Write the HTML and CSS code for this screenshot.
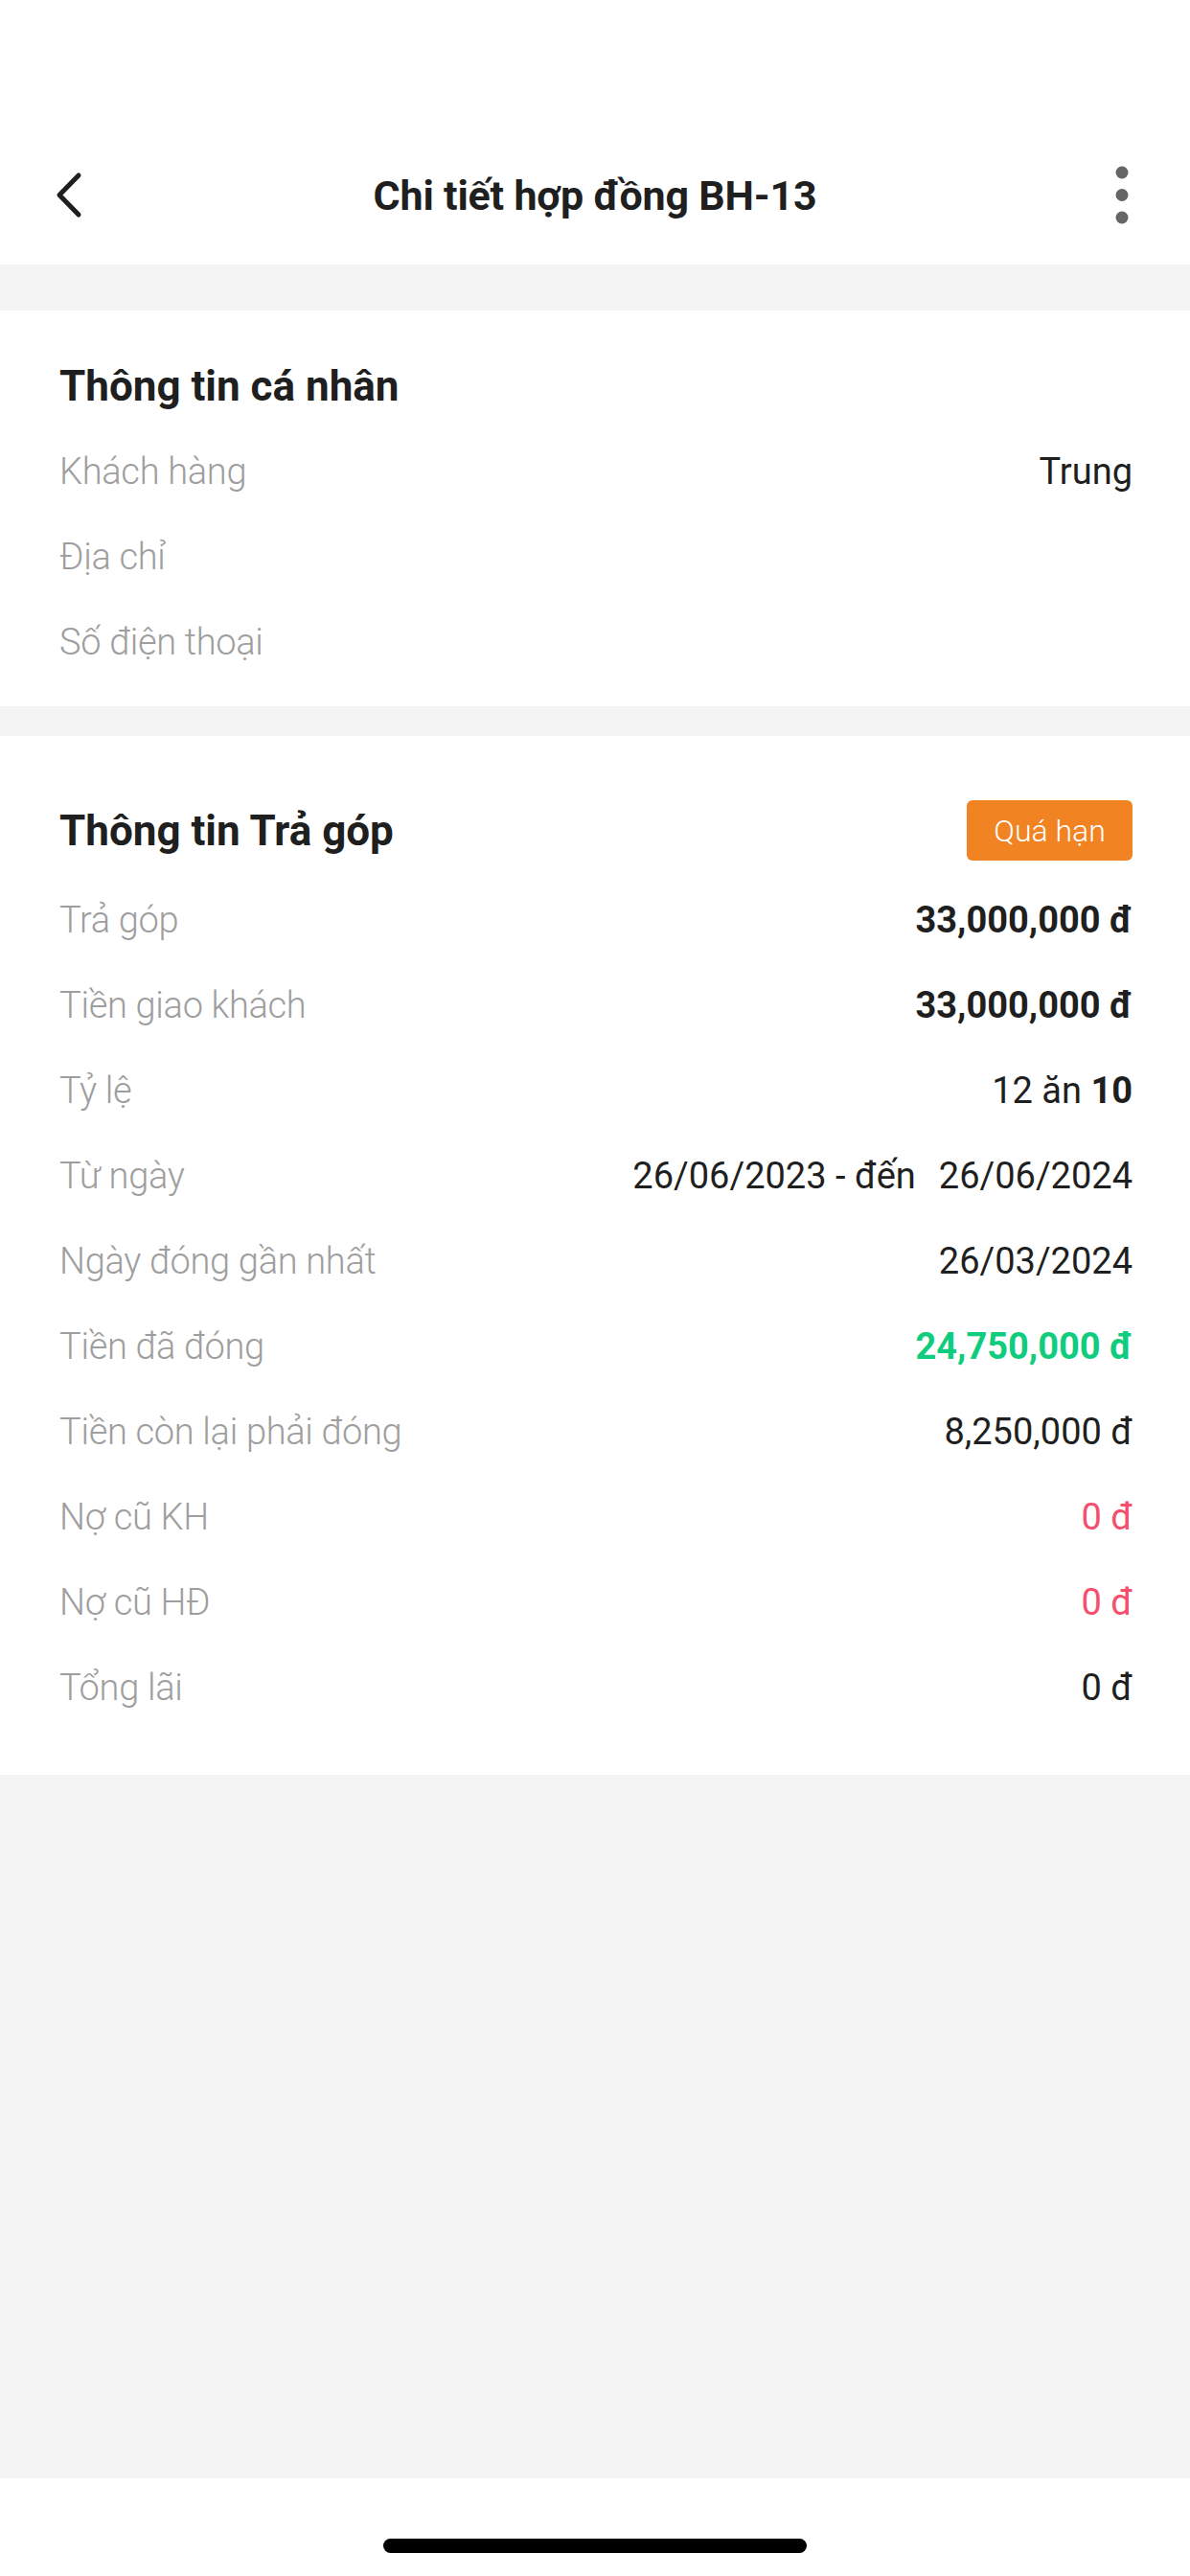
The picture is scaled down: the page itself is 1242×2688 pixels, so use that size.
FILE: index.html
```html
<!DOCTYPE html>
<html lang="vi">
<head>
<meta charset="utf-8">
<title>Chi tiết hợp đồng BH-13</title>
<link rel="stylesheet" href="styles.css">
</head>
<body>
<div class="screen">
  <header class="header">
    <div class="nav">
      <div class="nav-left">
        <svg class="back" width="34" height="52" viewBox="0 0 34 52">
          <polyline points="27,5 7,25.5 27,46" fill="none" stroke="#1f1f1f" stroke-width="5" stroke-linecap="round" stroke-linejoin="round"/>
        </svg>
      </div>
      <h1 class="title">Chi tiết hợp đồng BH-13</h1>
      <div class="nav-right">
        <svg class="more" width="14" height="62" viewBox="0 0 14 62">
          <circle cx="7" cy="7" r="6.5" fill="#666"/>
          <circle cx="7" cy="30.5" r="6.5" fill="#666"/>
          <circle cx="7" cy="54" r="6.5" fill="#666"/>
        </svg>
      </div>
    </div>
  </header>

  <section class="card card-personal">
    <div class="card-head">
      <h2 class="card-title">Thông tin cá nhân</h2>
    </div>
    <div class="row"><span class="label">Khách hàng</span><span class="value">Trung</span></div>
    <div class="row"><span class="label">Địa chỉ</span><span class="value"></span></div>
    <div class="row"><span class="label">Số điện thoại</span><span class="value"></span></div>
  </section>

  <section class="card card-install">
    <div class="card-head head-install">
      <h2 class="card-title">Thông tin Trả góp</h2>
      <span class="badge">Quá hạn</span>
    </div>
    <div class="row"><span class="label">Trả góp</span><span class="value bold">33,000,000 đ</span></div>
    <div class="row"><span class="label">Tiền giao khách</span><span class="value bold">33,000,000 đ</span></div>
    <div class="row"><span class="label">Tỷ lệ</span><span class="value">12 ăn <b class="bold">10</b></span></div>
    <div class="row"><span class="label">Từ ngày</span><span class="value">26/06/2023 - đến<span class="sep"></span>26/06/2024</span></div>
    <div class="row"><span class="label">Ngày đóng gần nhất</span><span class="value">26/03/2024</span></div>
    <div class="row"><span class="label">Tiền đã đóng</span><span class="value bold green">24,750,000 đ</span></div>
    <div class="row"><span class="label">Tiền còn lại phải đóng</span><span class="value">8,250,000 đ</span></div>
    <div class="row"><span class="label">Nợ cũ KH</span><span class="value red">0 đ</span></div>
    <div class="row"><span class="label">Nợ cũ HĐ</span><span class="value red">0 đ</span></div>
    <div class="row"><span class="label">Tổng lãi</span><span class="value">0 đ</span></div>
  </section>

  <div class="filler"></div>

  <footer class="home-bar">
    <div class="home-indicator"></div>
  </footer>
</div>
</body>
</html>
```

FILE: styles.css
```css
* {
  box-sizing: border-box;
}

html, body {
  margin: 0;
  padding: 0;
}

body {
  background: #f4f4f4;
  font-family: Roboto, "Noto Sans", "Liberation Sans", sans-serif;
  color: #1f1f1f;
}

.screen {
  width: 1242px;
  height: 2688px;
  display: flex;
  flex-direction: column;
  background: #f4f4f4;
}

.header {
  background: #fff;
  height: 276px;
  padding-top: 132px;
}

.nav {
  height: 144px;
  display: grid;
  grid-template-columns: 1fr auto 1fr;
  align-items: center;
}

.nav-left {
  display: flex;
  align-items: center;
  padding-left: 55px;
}

.nav-right {
  display: flex;
  justify-content: flex-end;
  align-items: center;
  padding-right: 64px;
}

.back, .more {
  display: block;
}

.title {
  margin: 0;
  font-size: 43px;
  font-weight: 700;
  letter-spacing: -0.2px;
  color: #1f1f1f;
  line-height: 1;
}

.card {
  background: #fff;
  padding-left: 62px;
  padding-right: 60px;
}

.card-personal {
  margin-top: 48px;
  padding-top: 34px;
  padding-bottom: 23px;
}

.card-install {
  margin-top: 31px;
  padding-top: 50px;
  padding-bottom: 47px;
}

.card-head {
  height: 89px;
  display: flex;
  align-items: center;
  justify-content: space-between;
}

.head-install {
  height: 97px;
}

.card-title {
  margin: 0;
  font-size: 44px;
  font-weight: 700;
  letter-spacing: 0;
  color: #1f1f1f;
}

.badge {
  width: 173px;
  height: 63px;
  border-radius: 6px;
  background: #f28322;
  color: #fff;
  font-size: 32px;
  font-weight: 300;
  display: flex;
  align-items: center;
  justify-content: center;
}

.row {
  height: 89px;
  display: flex;
  align-items: center;
  justify-content: space-between;
  font-size: 38px;
}

.label {
  color: #9e9e9e;
  font-weight: 300;
  letter-spacing: -0.3px;
}

.value {
  color: #1f1f1f;
  font-weight: 400;
}

.bold {
  font-weight: 700;
}

.green {
  color: #10cc7e;
}

.red {
  color: #f4506e;
}

.sep {
  display: inline-block;
  width: 24px;
}

.filler {
  flex: 1;
}

.home-bar {
  height: 102px;
  background: #fff;
  display: flex;
  justify-content: center;
  padding-top: 63px;
}

.home-indicator {
  width: 442px;
  height: 15px;
  border-radius: 8px;
  background: #000;
}
```
